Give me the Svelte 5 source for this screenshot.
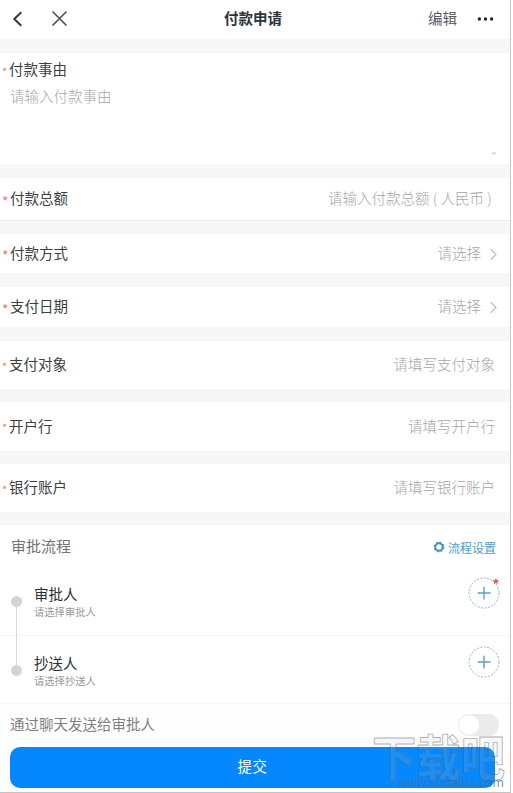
<script lang="ts">
	type Field = {
		label: string;
		hint: string;
		height: number;
		tight?: boolean;
		arrow?: boolean;
		line?: boolean;
	};

	const fields: Field[] = [
		{ label: '付款总额', hint: '请输入付款总额(人民币)', height: 42, line: true },
		{ label: '付款方式', hint: '请选择', height: 39, arrow: true },
		{ label: '支付日期', hint: '请选择', height: 40, arrow: true },
		{ label: '支付对象', hint: '请填写支付对象', height: 48, tight: true },
		{ label: '开户行', hint: '请填写开户行', height: 49, tight: true },
		{ label: '银行账户', hint: '请填写银行账户', height: 48, tight: true }
	];

	const steps = [
		{ name: '审批人', hint: '请选择审批人', required: true },
		{ name: '抄送人', hint: '请选择抄送人', required: false }
	];
</script>

<div class="screen">
	<header>
		<svg class="back" width="12" height="18" viewBox="0 0 12 18"><path d="M10.3 2.2 3.3 9l7 6.8" /></svg>
		<svg class="close" width="17" height="17" viewBox="0 0 17 17"><path d="M1.5 1.5l14 14M15.5 1.5l-14 14" /></svg>
		<h1>付款申请</h1>
		<span class="edit">编辑</span>
		<svg class="more" width="18" height="6" viewBox="0 0 18 6">
			<circle cx="2.4" cy="3" r="1.7" /><circle cx="8.5" cy="3" r="1.7" /><circle cx="14.6" cy="3" r="1.7" />
		</svg>
	</header>

	<section class="reason">
		<div class="label tight"><i>*</i>付款事由</div>
		<p class="hint">请输入付款事由</p>
		<svg class="grip" width="5" height="4" viewBox="0 0 5 4"><path d="M0.5 2.5 4.5 1.5M2 3.5 4.5 2.5" /></svg>
	</section>

	{#each fields as field}
		<section class="row" class:line={field.line} style="height: {field.height}px">
			<div class="label" class:tight={field.tight}><i>*</i>{field.label}</div>
			<span class="hint">
				{#if field.line}
					请输入付款总额<b>(</b>人民币<b>)</b>
				{:else}
					{field.hint}
				{/if}
			</span>
			{#if field.arrow}
				<svg class="arrow" width="7" height="13" viewBox="0 0 7 13"><path d="M0.8 1.2 6 6.5.8 11.8" /></svg>
			{/if}
		</section>
	{/each}

	<section class="flow">
		<div class="flow-head">
			<span class="flow-title">审批流程</span>
			<span class="setting">
				<svg width="12" height="12" viewBox="0 0 12 12">
					<circle cx="6" cy="6" r="4.7" class="teeth" />
					<circle cx="6" cy="6" r="3.7" class="ring" />
				</svg>
				流程设置
			</span>
		</div>
		{#each steps as step}
			<div class="step">
				<span class="dot"></span>
				<div class="who">
					<strong>{step.name}</strong>
					<small>{step.hint}</small>
				</div>
				<div class="add">
					<svg width="32" height="32" viewBox="0 0 32 32">
						<circle cx="16" cy="16" r="15" />
						<path d="M9.7 16h12.8M16 9.7v12.8" />
					</svg>
					{#if step.required}<i>*</i>{/if}
				</div>
			</div>
		{/each}
	</section>

	<footer>
		<div class="send">
			<span>通过聊天发送给审批人</span>
			<span class="switch"></span>
		</div>
		<div class="submit">提交</div>
	</footer>

	<div class="mark">
		<svg width="136" height="60" viewBox="0 0 136 60">
			<text class="big" x="0" y="44" textLength="133" lengthAdjust="spacingAndGlyphs">下载吧</text>
			<text class="url" x="26" y="55" textLength="106" lengthAdjust="spacingAndGlyphs">www.xiazaiba.com</text>
		</svg>
	</div>
</div>

<style>
	:global(body) {
		background: #fff;
	}

	.screen {
		position: relative;
		box-sizing: border-box;
		width: 511px;
		height: 793px;
		border-right: 1px solid #c9c6c8;
		border-bottom: 1px solid #c4c4c4;
		background: #f7f7f7;
		overflow: hidden;
		font-family: 'Noto Sans CJK SC', sans-serif;
		font-size: 14.5px;
		color: #3c3f44;
		display: flex;
		flex-direction: column;
	}

	svg {
		display: block;
		fill: none;
		flex: none;
	}

	i {
		font-style: normal;
		color: #e5806a;
	}

	header {
		height: 39px;
		box-sizing: border-box;
		padding-bottom: 2px;
		display: flex;
		align-items: center;
		background: #fff;
		flex: none;
	}

	.back {
		margin-left: 11px;
		stroke: #33383e;
		stroke-width: 2;
	}

	.close {
		margin-left: 28px;
		stroke: #4b5056;
		stroke-width: 1.6;
	}

	h1 {
		margin: -1px 0 0 156px;
		width: 60px;
		font-size: 14.5px;
		line-height: 20px;
		font-weight: 700;
		color: #2d333d;
		white-space: nowrap;
	}

	.edit {
		margin: -1px 0 0 144px;
		width: 30px;
		line-height: 20px;
		color: #565b62;
	}

	.more {
		margin-left: 19px;
		fill: #23272d;
	}

	section {
		background: #fff;
		flex: none;
	}

	.reason {
		height: 111px;
		margin: 14px 0;
		padding-top: 6px;
		box-sizing: border-box;
		position: relative;
	}

	.label {
		display: flex;
		align-items: center;
		line-height: 20px;
		white-space: nowrap;
	}

	.label i {
		width: 8px;
		margin-left: 2px;
		font-size: 14px;
		line-height: 14px;
		padding-top: 5px;
	}

	.label.tight i {
		width: 7px;
		font-size: 11px;
		padding-top: 3px;
	}

	.hint {
		margin: 0;
		line-height: 20px;
		color: #a6a6a6;
		font-weight: 300;
		white-space: nowrap;
	}

	.hint b {
		display: inline-block;
		width: 11px;
		text-align: center;
		font-weight: 300;
	}

	.reason .hint {
		padding: 7px 0 0 10px;
	}

	.grip {
		position: absolute;
		right: 14px;
		bottom: 9px;
		stroke: #b5b5b5;
		stroke-width: 0.7;
	}

	.row {
		box-sizing: border-box;
		display: flex;
		align-items: center;
		justify-content: space-between;
		padding: 0 15px 2px 0;
		margin-bottom: 14px;
	}

	.row.line {
		box-shadow: 0 1px 0 #ececec;
	}

	.row:has(.tight) {
		margin-bottom: 13px;
	}

	.row .label {
		flex: 1;
	}

	.arrow {
		margin: 3px -2px 0 9px;
		stroke: #c2c2c2;
		stroke-width: 1.3;
	}

	.flow {
		height: 179px;
	}

	.flow-head {
		height: 43px;
		box-sizing: border-box;
		display: flex;
		justify-content: space-between;
		padding: 0 14px 2px 11px;
		align-items: center;
	}

	.flow-title {
		font-size: 15px;
		color: #737373;
	}

	.setting {
		display: flex;
		align-items: center;
		gap: 3px;
		font-size: 12px;
		color: #4f9cc4;
		padding-top: 3px;
	}

	.ring {
		stroke: #3f91c0;
		stroke-width: 2;
	}

	.teeth {
		stroke: #3f91c0;
		stroke-width: 1.4;
		stroke-dasharray: 1.85 1.84;
	}

	.step {
		position: relative;
		box-sizing: border-box;
		height: 68px;
		display: flex;
		align-items: flex-start;
		padding: 13px 10px 0 11px;
		border-bottom: 1px solid #f6f6f6;
	}

	.step:last-child {
		padding-top: 14px;
	}

	.dot {
		width: 11px;
		height: 11px;
		margin-top: 15px;
		border-radius: 50%;
		background: #d4d4d4;
	}

	/* connector down to the next step */
	.step:nth-child(2)::after {
		content: '';
		position: absolute;
		left: 16px;
		top: 38px;
		width: 1px;
		height: 60px;
		background: #d9d9d9;
	}

	.who {
		flex: 1;
		margin-left: 12px;
		padding-top: 3px;
	}

	.who strong,
	.who small {
		display: block;
		font-weight: 400;
	}

	.who strong {
		line-height: 20px;
		color: #2b2f36;
	}

	.who small {
		font-size: 10.3px;
		line-height: 15px;
		color: #999;
	}

	.add {
		position: relative;
		margin-top: -4px;
	}

	.add circle {
		stroke: #8fb4cb;
		stroke-width: 1;
		stroke-dasharray: 2 1.5;
	}

	.add path {
		stroke: #5d9fc2;
		stroke-width: 1.4;
	}

	.add i {
		position: absolute;
		right: 0;
		top: 0;
		font-size: 17px;
		line-height: 16px;
		color: #e5483c;
	}

	footer {
		flex: 1;
		background: #fefefe;
		padding: 0 15px 0 10px;
	}

	.send {
		height: 43px;
		display: flex;
		align-items: center;
		justify-content: space-between;
		color: #808080;
		margin-right: -4px;
		box-sizing: border-box;
	}

	.send span:first-child {
		margin-top: -4px;
	}

	.switch {
		width: 41px;
		height: 22px;
		border-radius: 11px;
		background: #ebebeb;
		margin-top: -2px;
	}

	.switch::before {
		content: '';
		display: block;
		width: 20px;
		height: 20px;
		margin: 1px;
		border-radius: 50%;
		background: #fff;
	}

	.submit {
		height: 41px;
		border-radius: 10px;
		background: #0588fe;
		color: #fff;
		text-align: center;
		line-height: 37px;
		letter-spacing: 0.5px;
	}

	/* site stamp over the lower right corner */
	.mark {
		position: absolute;
		left: 372px;
		top: 732px;
	}

	.mark text {
		font-family: 'Noto Sans CJK SC', sans-serif;
		stroke-linejoin: round;
	}

	.mark .big {
		font-size: 49px;
		font-weight: 700;
		fill: rgba(200, 200, 200, 0.12);
		stroke: rgba(100, 105, 110, 0.55);
		stroke-width: 0.9;
	}

	.mark .url {
		font-family: 'Noto Sans', sans-serif;
		font-size: 12px;
		fill: rgba(70, 110, 150, 0.75);
	}
</style>
